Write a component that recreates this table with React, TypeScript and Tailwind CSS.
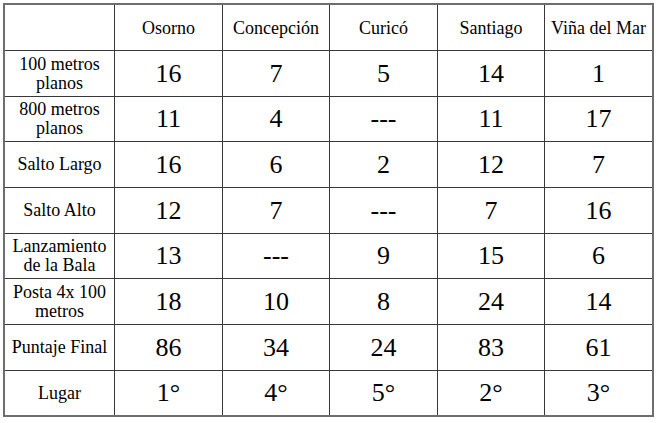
import React from "react";

const header = ["", "Osorno", "Concepción", "Curicó", "Santiago", "Viña del Mar"];

const rows: { label: string[]; values: string[]; h: string }[] = [
  { label: ["100 metros", "planos"], values: ["16", "7", "5", "14", "1"], h: "h-[45px]" },
  { label: ["800 metros", "planos"], values: ["11", "4", "---", "11", "17"], h: "h-[44px]" },
  { label: ["Salto Largo"], values: ["16", "6", "2", "12", "7"], h: "h-[45px]" },
  { label: ["Salto Alto"], values: ["12", "7", "---", "7", "16"], h: "h-[45px]" },
  { label: ["Lanzamiento", "de la Bala"], values: ["13", "---", "9", "15", "6"], h: "h-[44px]" },
  { label: ["Posta 4x 100", "metros"], values: ["18", "10", "8", "24", "14"], h: "h-[45px]" },
  { label: ["Puntaje Final"], values: ["86", "34", "24", "83", "61"], h: "h-[45px]" },
  { label: ["Lugar"], values: ["1°", "4°", "5°", "2°", "3°"], h: "h-[44px]" },
];

export default function App() {
  return (
    <div className="w-[657px] h-[423px] bg-white pt-[3px] pl-[3px] overflow-hidden font-['Liberation_Serif','Times_New_Roman',serif]">
      <div className="w-[651px] border-2 border-[#6e6e6e] bg-[#383838] grid grid-cols-[109px_107px_106px_107px_106px_107px] gap-px text-black">
        {header.map((h, i) => (
          <div
            key={"h" + i}
            className="h-[45px] bg-white flex items-center justify-center text-[18px] leading-[20px] whitespace-nowrap"
          >
            {h}
          </div>
        ))}
        {rows.map((r, ri) => (
          <React.Fragment key={"r" + ri}>
            <div
              className={`${r.h} bg-white flex flex-col items-center justify-center text-[18px] leading-[19px] whitespace-nowrap`}
            >
              {r.label.map((l, li) => (
                <span key={li}>{l}</span>
              ))}
            </div>
            {r.values.map((v, vi) => (
              <div
                key={vi}
                className={`${r.h} bg-white flex items-center justify-center text-[26px] leading-[28px]`}
              >
                {v}
              </div>
            ))}
          </React.Fragment>
        ))}
      </div>
    </div>
  );
}
